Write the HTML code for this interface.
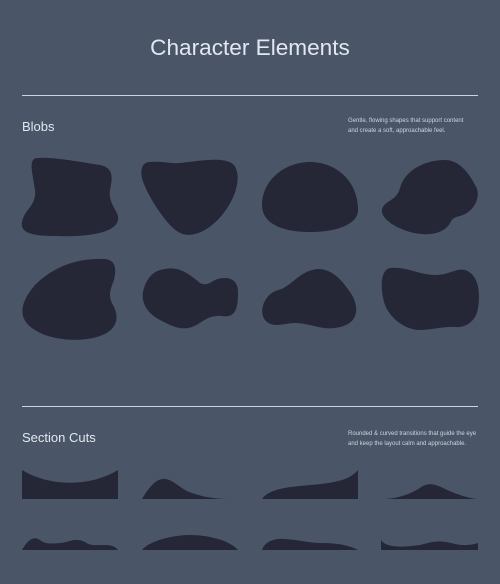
<!DOCTYPE html>
<html><head><meta charset="utf-8"><style>
html,body{margin:0;padding:0;}
body{width:500px;height:584px;background:#4a5568;position:relative;overflow:hidden;font-family:"Liberation Sans",Arial,sans-serif;color:#e2e8f0;}
.t{position:absolute;white-space:nowrap;}
.hr{position:absolute;left:22px;width:456px;height:1px;background:#cbd5e0;}
.d{font-size:6px;line-height:9.5px;color:#cbd5e0;left:348px;}
svg{position:absolute;left:0;top:0;}
</style></head><body>
<div class="t" style="left:0;width:500px;text-align:center;top:35px;font-size:22.6px;">Character Elements</div>
<div class="hr" style="top:95px"></div>
<div class="t" style="left:22px;top:119px;font-size:13px;">Blobs</div>
<div class="t d" style="top:117px;">Gentle, flowing shapes that support content<br>and create a soft, approachable feel.</div>
<div class="hr" style="top:406px"></div>
<div class="t" style="left:22px;top:430px;font-size:13px;">Section Cuts</div>
<div class="t d" style="top:430px;">Rounded &amp; curved transitions that guide the eye<br>and keep the layout calm and approachable.</div>
<svg width="500" height="584" viewBox="0 0 500 584"><g fill="#252736">
<path d="M38,158 C55,157 80,162 100,165 C115,168 112,180 110,190 C108,205 120,212 118,220 C115,235 80,237 55,236 C30,236 20,232 22,222 C24,210 37,205 35,190 C32,170 28,158 38,158 Z"/>
<path d="M150,162 C165,161 170,164 180,163 C200,161 225,156 234,165 C245,180 230,215 205,230 C190,238 180,236 170,225 C158,212 145,190 142,178 C140,168 143,162 150,162 Z"/>
<path d="M262,205 C262,180 285,162 310,162 C335,162 358,180 358,210 C358,225 335,232 310,232 C285,232 262,225 262,205 Z"/>
<path d="M445,160 C460,160 470,175 475,185 C482,195 475,212 460,216 C450,218 452,222 448,226 C440,235 425,236 410,232 C390,226 378,215 383,207 C387,200 397,200 400,188 C405,170 425,160 445,160 Z"/>
<path d="M105,259 C115,260 117,268 114,280 C110,290 108,296 113,305 C120,318 117,330 100,336 C80,343 50,340 35,330 C15,318 22,300 35,285 C55,265 80,258 105,259 Z"/>
<path d="M165,269 C180,266 190,275 200,283 C206,286 210,283 215,280 C225,276 238,277 238,292 C238,310 235,318 222,316 C210,315 205,320 198,324 C185,332 175,328 160,320 C145,312 140,300 144,288 C148,276 155,270 165,269 Z"/>
<path d="M318,269 C335,269 345,285 352,295 C360,310 358,325 335,328 C320,330 310,323 295,323 C285,323 275,328 267,322 C258,315 262,295 278,290 C290,288 300,270 318,269 Z"/>
<path d="M390,268 C405,266 420,275 435,275 C450,275 455,268 465,270 C480,275 480,295 478,308 C476,322 465,328 455,327 C445,326 430,330 420,330 C405,330 390,318 385,305 C380,290 380,270 390,268 Z"/>
<path d="M22,470 C50,487 90,487 118,470 L118,499 L22,499 Z"/>
<path d="M142,499 C150,485 158,478 165,479 C175,480 180,490 195,494 C210,499 225,499 232,499 Z"/>
<path d="M262,499 C270,488 290,487 310,485 C335,483 350,480 358,470 L358,499 Z"/>
<path d="M385,499 C400,498 410,494 420,488 C428,482 435,484 445,489 C458,495 468,498 477,499 Z"/>
<path d="M22,550 C27,541 33,535 40,540 C45,544 50,544 60,543 C70,542 75,537 85,542 C90,546 95,545 105,545 C112,545 116,547 118,550 Z"/>
<path d="M142,550 C150,540 175,535 190,535 C210,535 230,541 238,550 Z"/>
<path d="M262,550 C265,541 275,538 285,539 C300,540 310,543 320,543 C340,543 350,546 358,550 Z"/>
<path d="M381,540 C385,547 400,548 420,545 C435,541 440,540 455,544 C465,546 472,545 478,543 L478,550 L381,550 Z"/>
</g></svg>
</body></html>
